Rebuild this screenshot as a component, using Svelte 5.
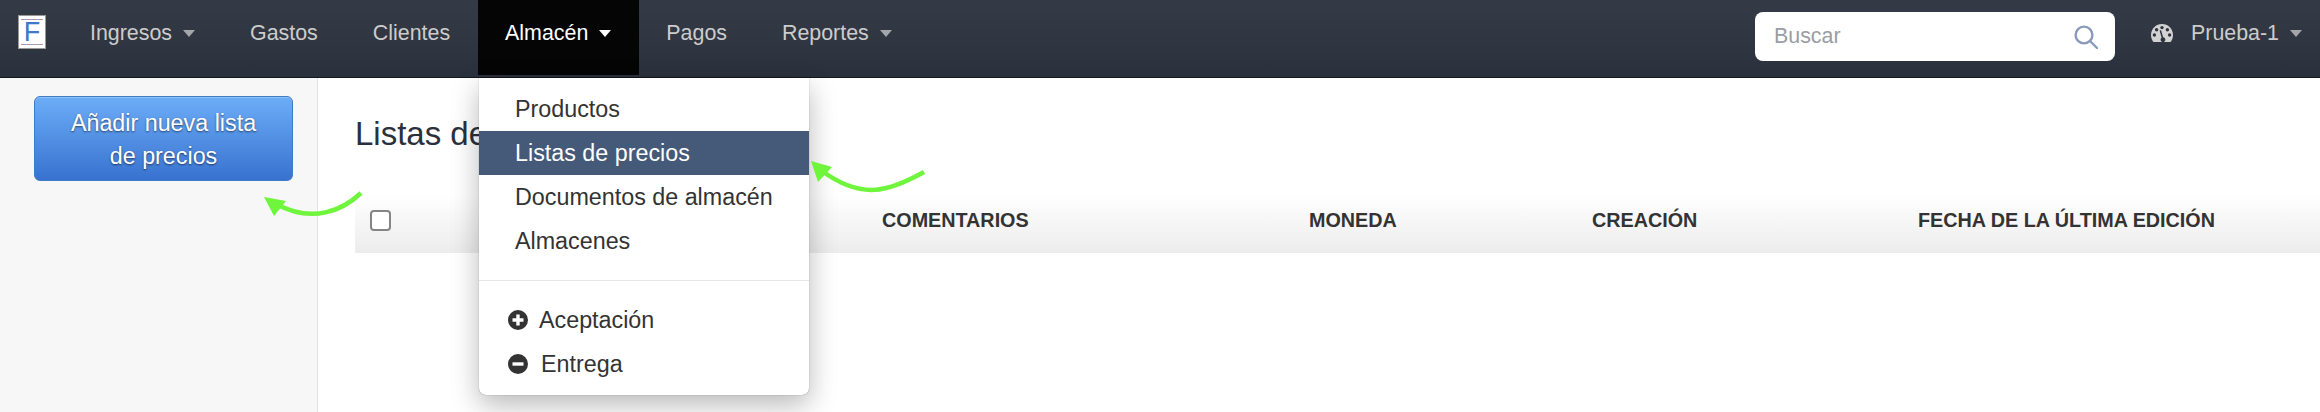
<script lang="ts">
  const navLeft = [
    { label: 'Ingresos', caret: true },
    { label: 'Gastos' },
    { label: 'Clientes' },
    { label: 'Almacén', caret: true, open: true },
    { label: 'Pagos' },
    { label: 'Reportes', caret: true },
  ]

  const menuItems = [
    { label: 'Productos' },
    { label: 'Listas de precios', active: true },
    { label: 'Documentos de almacén' },
    { label: 'Almacenes' },
  ]

  const columns = ['', 'NOMBRE', 'COMENTARIOS', 'MONEDA', 'CREACIÓN', 'FECHA DE LA ÚLTIMA EDICIÓN']
</script>

<header class="topbar">
  <div class="logo"><span>F</span></div>
  <nav class="nav-list">
    {#each navLeft as item}
      <div class="nav-item" class:open={item.open}>
        {item.label}
        {#if item.caret}<span class="caret"></span>{/if}
      </div>
    {/each}
  </nav>
  <div class="search">
    <span class="search-text">Buscar</span>
    <svg class="search-icon" viewBox="0 0 24 24" width="24" height="24" fill="none" stroke="#8a9ab8" stroke-width="2.4">
      <circle cx="10" cy="10" r="8.4" />
      <path d="M16 16l7 7" stroke-linecap="round" />
    </svg>
  </div>
  <div class="account">
    <svg viewBox="0 0 22 18" width="22" height="18">
      <path fill="#d2d2d2" d="M11 0C4.9 0 0 4.9 0 11c0 2.6.9 5 2.4 7h17.2c1.5-2 2.4-4.4 2.4-7 0-6.1-4.9-11-11-11z" />
      <g fill="#2e343f">
        <circle cx="11" cy="3.6" r="1.7" />
        <circle cx="5.6" cy="5.8" r="1.7" />
        <circle cx="16.4" cy="5.8" r="1.7" />
        <circle cx="3.4" cy="11" r="1.7" />
        <circle cx="18.6" cy="11" r="1.7" />
        <path d="M8.6 6.6l1.5-.4 2 7.1a2.4 2.4 0 1 1-1.5.4z" />
      </g>
    </svg>
    <span class="account-name">Prueba-1</span>
    <span class="caret"></span>
  </div>
</header>

<main class="page">
  <aside class="sidebar">
    <button class="add-btn">Añadir nueva lista de precios</button>
  </aside>
  <section class="content">
    <h1>Listas de precios</h1>
    <div class="table-head">
      {#each columns as col, i}
        <div class="th">
          {#if i === 0}<span class="checkbox"></span>{:else}{col}{/if}
        </div>
      {/each}
    </div>
  </section>
</main>

<div class="dropdown">
  <ul class="group">
    {#each menuItems as item}
      <li class="menu-item" class:active={item.active}>{item.label}</li>
    {/each}
  </ul>
  <div class="divider"></div>
  <ul class="group">
    <li class="menu-item with-icon">
      <svg viewBox="0 0 20 20" width="20" height="20">
        <circle cx="10" cy="10" r="10" fill="#333" />
        <path d="M10 4.5v11M4.5 10h11" stroke="#fff" stroke-width="3.4" />
      </svg>
      Aceptación
    </li>
    <li class="menu-item with-icon minus">
      <svg viewBox="0 0 20 20" width="20" height="20">
        <circle cx="10" cy="10" r="10" fill="#333" />
        <path d="M4.5 10h11" stroke="#fff" stroke-width="3.4" />
      </svg>
      Entrega
    </li>
  </ul>
</div>

<svg class="arrows" width="2320" height="412" viewBox="0 0 2320 412" fill="none">
  <path d="M361 193C343 210 313 224 276 204" stroke="#6ef53c" stroke-width="4.5" />
  <path d="M264 197L286 201L274 216Z" fill="#6ef53c" />
  <path d="M924 172C888 192 862 200 822 171" stroke="#6ef53c" stroke-width="4.5" />
  <path d="M811 161L832 167L818 182Z" fill="#6ef53c" />
</svg>

<style>
  :global(body) {
    margin: 0;
    overflow: hidden;
    background: #fff;
    font-family: "Liberation Sans", Arial, sans-serif;
    color: #333;
  }

  .topbar {
    display: flex;
    align-items: flex-start;
    height: 77px;
    border-bottom: 1px solid #14171c;
    background: linear-gradient(#343b47, #2b313c);
    font-size: 21.4px;
    color: #ccc;
  }

  .logo {
    display: flex;
    align-items: center;
    justify-content: center;
    box-sizing: border-box;
    width: 28px;
    height: 34px;
    margin: 15px 17px 0 18px;
    border: 1px solid #999;
    background:
      repeating-linear-gradient(90deg, #d98a8a 0 3px, #8aa6d9 3px 6px) top 3px left 2px / 22px 1px no-repeat,
      repeating-linear-gradient(90deg, #d98a8a 0 3px, #8aa6d9 3px 6px) bottom 3px left 2px / 22px 1px no-repeat,
      #fff;
    color: #3d78c9;
    font-size: 27px;
    line-height: 1;
  }

  .nav-list {
    display: flex;
  }

  .nav-item {
    display: flex;
    align-items: center;
    height: 75px;
    padding: 0 28px 9px 27px;
    box-sizing: border-box;
    white-space: nowrap;
  }

  .nav-item.open {
    color: #fff;
    background: #050505;
  }

  .caret {
    width: 0;
    height: 0;
    margin-left: 11px;
    border-top: 7px solid currentColor;
    border-left: 6.5px solid transparent;
    border-right: 6.5px solid transparent;
    opacity: 0.75;
  }

  .nav-item.open .caret {
    opacity: 1;
  }

  .search {
    display: flex;
    align-items: center;
    justify-content: space-between;
    box-sizing: border-box;
    width: 360px;
    height: 49px;
    margin: 12px 0 0 auto;
    padding: 0 17px 0 19px;
    border-radius: 8px;
    background: #fff;
    color: #9a9da3;
  }

  .search-text {
    font-size: 21.4px;
  }

  .account {
    display: flex;
    align-items: center;
    height: 66px;
    margin-left: 36px;
    padding: 0 18px 0 0;
  }

  .account-name {
    margin-left: 18px;
  }

  .page {
    display: flex;
    height: 334px;
  }

  .sidebar {
    box-sizing: border-box;
    width: 318px;
    padding: 18px 24px 0 34px;
    border-right: 1px solid #e2e3ea;
    background: #f7f7f7;
  }

  .add-btn {
    display: block;
    box-sizing: border-box;
    width: 259px;
    height: 85px;
    padding: 2px 20px 0;
    border: 1px solid #3d7cc9;
    border-radius: 6px;
    background: linear-gradient(#6cadf8, #3872cf);
    box-shadow: inset 0 1px 0 rgba(255, 255, 255, 0.25);
    color: #fff;
    font: 23.3px/33px "Liberation Sans", Arial, sans-serif;
    text-shadow: 0 1px 2px rgba(0, 0, 0, 0.55);
    text-align: center;
    vertical-align: top;
  }

  .content {
    flex: 1;
    padding: 0 0 0 37px;
  }

  h1 {
    margin: 36px 0 0;
    color: #2b313c;
    font-size: 33px;
    font-weight: 400;
    line-height: 40px;
    white-space: nowrap;
  }

  .table-head {
    display: grid;
    grid-template-columns: 140px 387px 427px 283px 326px 1fr;
    align-items: center;
    box-sizing: border-box;
    height: 58px;
    margin-top: 41px;
    padding-bottom: 8px;
    background: linear-gradient(#fff, #ececec);
    color: #333;
    font-size: 19.75px;
    font-weight: 700;
    white-space: nowrap;
  }

  .th {
    display: flex;
    align-items: center;
  }

  .checkbox {
    box-sizing: border-box;
    width: 21px;
    height: 21px;
    margin-left: 15px;
    border: 2px solid #858585;
    border-radius: 4px;
    background: #fff;
  }

  /* dropdown of the open "Almacén" entry */
  .dropdown {
    position: absolute;
    left: 479px;
    top: 78px;
    box-sizing: border-box;
    width: 330px;
    height: 317px;
    padding-top: 9px;
    border-radius: 0 0 7px 7px;
    background: #fff;
    box-shadow: 0 0 1px rgba(0, 0, 0, 0.5), 0 10px 28px rgba(0, 0, 0, 0.28);
    font-size: 23.3px;
    color: #333;
  }

  .group {
    margin: 0;
    padding: 0;
    list-style: none;
  }

  .menu-item {
    display: flex;
    align-items: center;
    height: 44px;
    padding: 0 36px;
    white-space: nowrap;
  }

  .menu-item.active {
    background: #445a78;
    color: #fff;
  }

  .menu-item.with-icon {
    padding-left: 29px;
  }

  .menu-item.with-icon svg {
    margin-right: 11px;
  }

  .menu-item.minus svg {
    margin-right: 13px;
  }

  .divider {
    height: 1px;
    margin: 17px 0 17px;
    background: #e5e5e5;
  }

  .arrows {
    position: absolute;
    left: 0;
    top: 0;
    pointer-events: none;
  }
</style>
